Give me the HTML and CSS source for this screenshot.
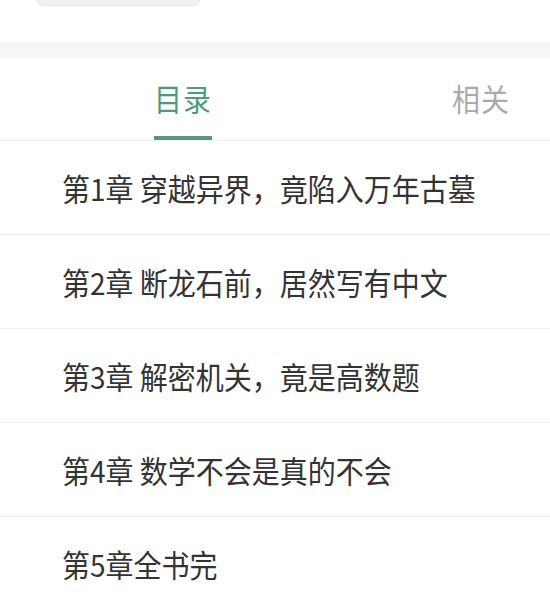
FILE: index.html
```html
<!DOCTYPE html>
<html lang="zh">
<head>
<meta charset="utf-8">
<link rel="stylesheet" href="styles.css">
</head>
<body>
<div class="top">
  <div class="top-box"></div>
</div>
<div class="band"></div>
<div class="tabs">
  <div class="tab active"><span class="txt">目录</span></div>
  <div class="tab"><span class="txt">相关</span></div>
</div>
<ul class="chapters">
  <li class="chapter"><span class="txt">第1章 穿越异界，竟陷入万年古墓</span></li>
  <li class="chapter"><span class="txt">第2章 断龙石前，居然写有中文</span></li>
  <li class="chapter"><span class="txt">第3章 解密机关，竟是高数题</span></li>
  <li class="chapter"><span class="txt">第4章 数学不会是真的不会</span></li>
  <li class="chapter"><span class="txt">第5章全书完</span></li>
</ul>
</body>
</html>
```

FILE: styles.css
```css
html, body {
  margin: 0;
  padding: 0;
  background: #ffffff;
  font-family: "Noto Sans CJK SC", "Noto Sans", sans-serif;
  width: 550px;
  height: 594px;
  overflow: hidden;
}
.top {
  height: 42px;
  padding-left: 37px;
}
.top-box {
  width: 161px;
  height: 5px;
  background: #f1f1f1;
  border: 1px solid #e6e6e6;
  border-top: none;
  border-radius: 0 0 6px 6px;
}
.band {
  height: 16px;
  background: #f6f6f6;
}
.tabs {
  display: flex;
  align-items: flex-end;
  padding-left: 154px;
  gap: 240px;
  padding-top: 26px;
  border-bottom: 1px solid #eeeeee;
}
.tab {
  font-size: 28px;
  line-height: 28px;
  color: #aaaaaa;
  padding-bottom: 28px;
  letter-spacing: 1px;
}
.tab.active {
  color: #4f9a7d;
  padding-bottom: 24px;
  border-bottom: 4px solid #5a9582;
}
.txt {
  display: inline-block;
  transform: scaleY(1.08);
}
.chapters {
  list-style: none;
  margin: 0;
  padding: 0;
}
.chapter {
  height: 93px;
  display: flex;
  align-items: center;
  padding-left: 62px;
  font-size: 28px;
  color: #333333;
  border-bottom: 1px solid #eeeeee;
}
```
